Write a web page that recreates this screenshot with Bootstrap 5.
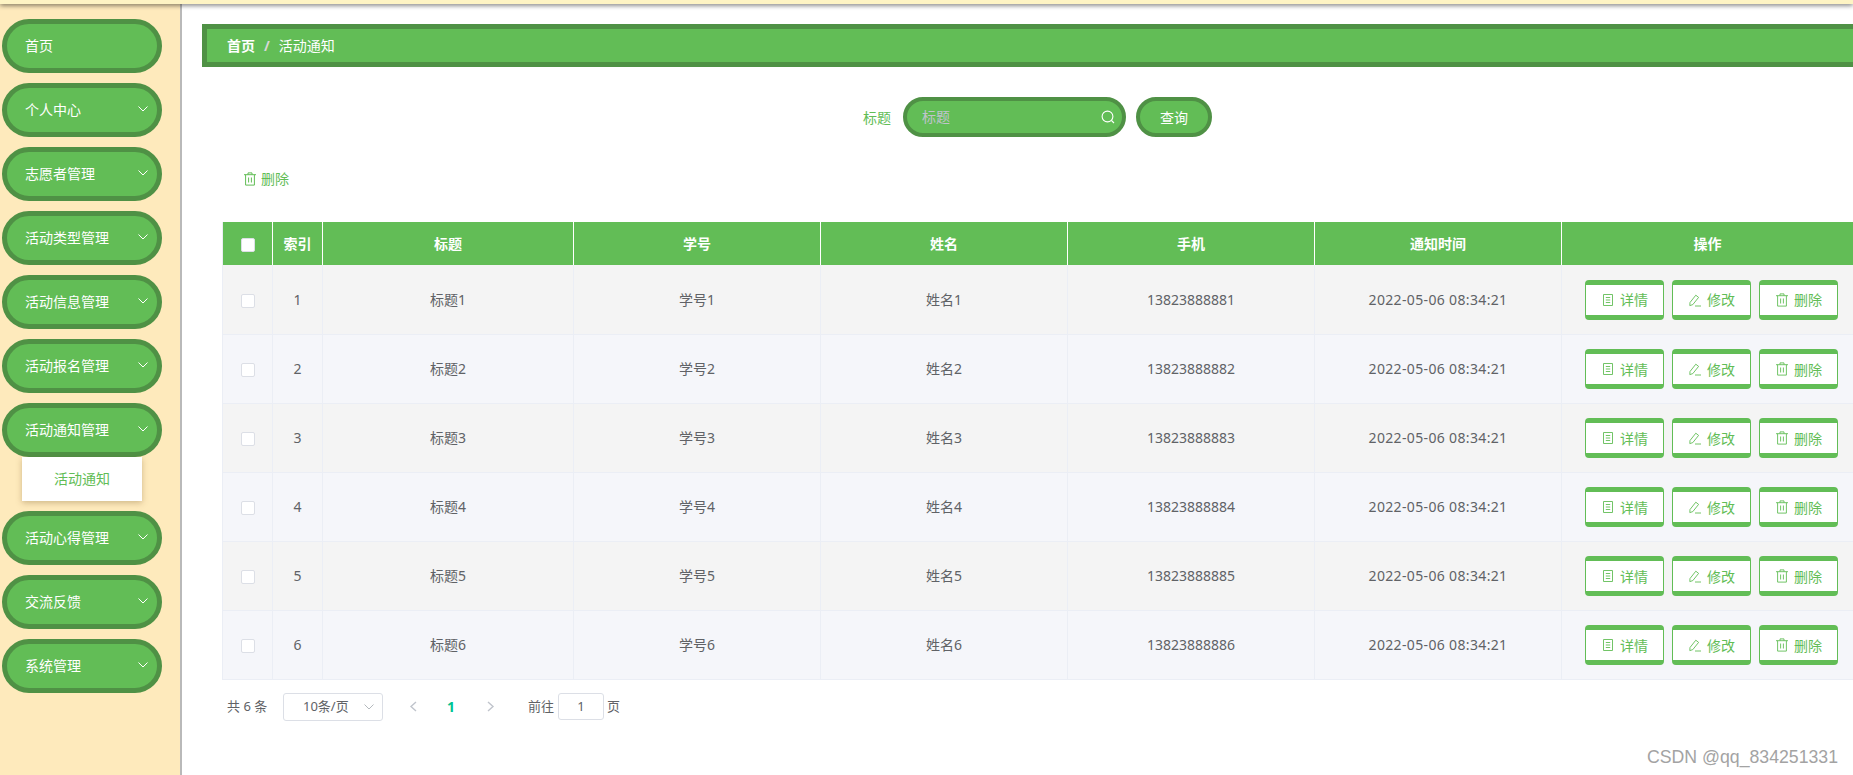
<!DOCTYPE html>
<html lang="zh-CN">
<head>
<meta charset="utf-8">
<title>活动通知</title>
<link href="https://cdn.jsdelivr.net/npm/bootstrap@5.3.0/dist/css/bootstrap.min.css" rel="stylesheet">
<style>
html,body{height:100%;overflow:hidden;}
body{font-family:"Noto Sans","Noto Sans CJK SC",sans-serif;font-size:14px;color:#606266;background:#fff;}
.top-strip{height:4px;background:#fef4c4;box-shadow:0 1px 5px rgba(0,0,0,.65);position:relative;z-index:2;}
.shell{height:771px;}
.side-rail{width:182px;flex:none;background:#feeabc;border-right:2px solid #b9b9b9;padding:15px 0 0 2px;}
.menu-pill{width:160px;height:54px;border:5px solid #4f9145;border-radius:27px;background:#62bd56;color:#fff;padding:0 9px 0 18px;margin-bottom:10px;line-height:1;}
.menu-pill svg{width:10px;height:6px;margin-top:-2px;}
.sub-panel{width:120px;height:44px;margin:-10px 0 10px 20px;background:#fff;box-shadow:0 2px 6px rgba(120,90,40,.35);color:#62bd56;padding:0 0 2px 32px;}
.work-area{width:1691px;flex:none;}
.crumb-bar{margin:20px 0 0 20px;height:43px;border:5px solid #4f9145;border-radius:0 30px 30px 0;background:#62bd56;padding-left:20px;color:#fff;}
.crumb-bar .breadcrumb{--bs-breadcrumb-margin-bottom:0;--bs-breadcrumb-divider-color:#d7d7d7;--bs-breadcrumb-item-padding-x:9px;color:#fff;}
.crumb-bar .breadcrumb-item{color:#fff;}
.crumb-bar .breadcrumb-item.active{color:#fff;}
.crumb-bar .breadcrumb-item+.breadcrumb-item::before{font-weight:700;}
.crumb-first{font-weight:700;}
.search-row{margin:30px 0 0 20px;height:40px;}
.search-label{color:#62bd56;margin-right:12px;}
.search-box{width:223px;height:40px;}
.search-input.form-control{height:40px;border:4px solid #4f9145;border-radius:20px;background:#62bd56;color:#fff;padding:0 30px 2px 15px;font-size:14px;box-shadow:none;}
.search-input.form-control::placeholder{color:#c0c4cc;opacity:1;}
.search-glass{position:absolute;right:11px;top:13px;width:14px;height:14px;}
.search-go.btn{width:76px;height:40px;margin-left:10px;border:4px solid #4f9145;border-radius:20px;background:#62bd56;color:#fff;font-size:14px;padding:0;}
.bulk-row{margin:26px 0 0 61px;height:31px;color:#62bd56;gap:4px;}
.bulk-row svg{width:14px;height:14px;}
.grid-box{margin:0 0 0 40px;width:1631px;padding-top:28px;}
.data-table.table{table-layout:fixed;width:1631px;margin:0;border-collapse:collapse;--bs-table-bg:transparent;--bs-table-color:#606266;font-size:14px;text-align:center;border-left:1px solid #ebeef5;}
.data-table th{height:43px;padding:0;background:#62bd56;color:#fff;font-weight:700;border:0;border-right:1px solid #fff;vertical-align:middle;}
.data-table td{height:69px;padding:0;border:0;border-right:1px solid #ebeef5;border-bottom:1px solid #ebeef5;vertical-align:middle;}
.data-table tbody tr:nth-child(odd) td{background:#f4f4f4;}
.data-table tbody tr:nth-child(even) td{background:#f5f6fa;}
.w-tick{width:50px;}.w-idx{width:50px;}.w-title{width:251px;}.w-mid{width:247px;}.w-ops{width:292px;}
.stamp{letter-spacing:.35px;}
.tick{display:inline-block;width:14px;height:14px;border:1px solid #dcdfe6;border-radius:2px;background:#fff;vertical-align:middle;}
.tick-head{margin-left:0;}
.row-btns{gap:8px;padding:1px 0 0 23px;}
.row-btn{width:79px;height:40px;border:1px solid #62bd56;border-top-width:5px;border-bottom-width:5px;border-radius:4px;background:#fff;color:#62bd56;gap:5px;font-size:14px;padding:0;}
.row-btn svg{width:14px;height:14px;flex:none;stroke-width:.9;}
.pager{margin:13px 0 0 5px;height:28px;color:#606266;font-size:13px;}
.pager-total{width:56px;}
.pager-size{width:100px;height:28px;border:1px solid #dcdfe6;border-radius:3px;padding:0 8px 0 19px;}
.pager-size svg{width:10px;height:6px;}
.pager-arrow{width:9px;height:11px;}
.pager-prev{margin-left:26px;}
.pager-cur{margin:0 31px 0 29px;color:#00c292;font-weight:700;font-size:14px;}
.pager-jump{margin-left:33px;}
.pager-input{width:46px;height:27px;border:1px solid #dcdfe6;border-radius:3px;margin:0 3px 0 4px;}
.mark-water{position:absolute;right:15px;bottom:8px;color:#a3a3a3;font-family:"Liberation Sans",sans-serif;font-size:17.7px;line-height:1;}
</style>
</head>
<body>
<svg width="0" height="0" class="d-block" aria-hidden="true">
<symbol id="i-down" viewBox="0 0 10 6"><path d="M.5.5 5 5 9.500.5" fill="none" stroke="currentColor"/></symbol>
<symbol id="i-trash" viewBox="0 0 14 14"><path d="M1 2.700h12M5 2.700V.9h4v1.800M2.600 2.700v10.400h8.800V2.700M5.600 5.500v5M8.400 5.500v5" fill="none" stroke="currentColor"/></symbol>
<symbol id="i-doc" viewBox="0 0 14 14"><path d="M2.500 1.500h9v11h-9zM4.800 4.500h4.400M4.800 7h4.400M4.800 9.500h4.400" fill="none" stroke="currentColor"/></symbol>
<symbol id="i-edit" viewBox="0 0 14 14"><path d="M2 9.500 7.800 2.200 10.600 4.400 4.800 11.600 1.800 12.600ZM7 13h6" fill="none" stroke="currentColor"/></symbol>
</svg>
<div class="top-strip"></div>
<div class="shell d-flex">
  <aside class="side-rail">
    <div class="menu-pill d-flex align-items-center">首页</div>
    <div class="menu-pill d-flex align-items-center justify-content-between">个人中心<svg><use href="#i-down"/></svg></div>
    <div class="menu-pill d-flex align-items-center justify-content-between">志愿者管理<svg><use href="#i-down"/></svg></div>
    <div class="menu-pill d-flex align-items-center justify-content-between">活动类型管理<svg><use href="#i-down"/></svg></div>
    <div class="menu-pill d-flex align-items-center justify-content-between">活动信息管理<svg><use href="#i-down"/></svg></div>
    <div class="menu-pill d-flex align-items-center justify-content-between">活动报名管理<svg><use href="#i-down"/></svg></div>
    <div class="menu-pill d-flex align-items-center justify-content-between">活动通知管理<svg><use href="#i-down"/></svg></div>
    <div class="sub-panel d-flex align-items-center">活动通知</div>
    <div class="menu-pill d-flex align-items-center justify-content-between">活动心得管理<svg><use href="#i-down"/></svg></div>
    <div class="menu-pill d-flex align-items-center justify-content-between">交流反馈<svg><use href="#i-down"/></svg></div>
    <div class="menu-pill d-flex align-items-center justify-content-between">系统管理<svg><use href="#i-down"/></svg></div>
  </aside>
  <main class="work-area">
    <nav class="crumb-bar d-flex align-items-center" aria-label="breadcrumb">
      <ol class="breadcrumb">
        <li class="breadcrumb-item crumb-first">首页</li>
        <li class="breadcrumb-item active">活动通知</li>
      </ol>
    </nav>
    <div class="search-row d-flex justify-content-center align-items-center">
      <span class="search-label">标题</span>
      <div class="search-box position-relative">
        <input class="form-control search-input" placeholder="标题">
        <svg class="search-glass" viewBox="0 0 14 14"><circle cx="6.500" cy="6.500" r="5.400" fill="none" stroke="#fff" stroke-width="1.100"/><path d="M10.500 10.500 13 13" stroke="#fff" stroke-width="1.100"/></svg>
      </div>
      <button class="btn search-go" type="button">查询</button>
    </div>
    <div class="bulk-row d-flex align-items-center"><svg><use href="#i-trash"/></svg><span>删除</span></div>
    <div class="grid-box">
      <table class="table data-table">
        <thead><tr>
          <th class="w-tick"><span class="tick tick-head"></span></th><th class="w-idx">索引</th><th class="w-title">标题</th><th class="w-mid">学号</th><th class="w-mid">姓名</th><th class="w-mid">手机</th><th class="w-mid">通知时间</th><th class="w-ops">操作</th>
        </tr></thead>
        <tbody>
          <tr><td><span class="tick"></span></td><td>1</td><td>标题1</td><td>学号1</td><td>姓名1</td><td>13823888881</td><td class="stamp">2022-05-06 08:34:21</td><td><div class="row-btns d-flex"><button class="row-btn d-flex align-items-center justify-content-center"><svg><use href="#i-doc"/></svg>详情</button><button class="row-btn d-flex align-items-center justify-content-center"><svg><use href="#i-edit"/></svg>修改</button><button class="row-btn d-flex align-items-center justify-content-center"><svg><use href="#i-trash"/></svg>删除</button></div></td></tr>
          <tr><td><span class="tick"></span></td><td>2</td><td>标题2</td><td>学号2</td><td>姓名2</td><td>13823888882</td><td class="stamp">2022-05-06 08:34:21</td><td><div class="row-btns d-flex"><button class="row-btn d-flex align-items-center justify-content-center"><svg><use href="#i-doc"/></svg>详情</button><button class="row-btn d-flex align-items-center justify-content-center"><svg><use href="#i-edit"/></svg>修改</button><button class="row-btn d-flex align-items-center justify-content-center"><svg><use href="#i-trash"/></svg>删除</button></div></td></tr>
          <tr><td><span class="tick"></span></td><td>3</td><td>标题3</td><td>学号3</td><td>姓名3</td><td>13823888883</td><td class="stamp">2022-05-06 08:34:21</td><td><div class="row-btns d-flex"><button class="row-btn d-flex align-items-center justify-content-center"><svg><use href="#i-doc"/></svg>详情</button><button class="row-btn d-flex align-items-center justify-content-center"><svg><use href="#i-edit"/></svg>修改</button><button class="row-btn d-flex align-items-center justify-content-center"><svg><use href="#i-trash"/></svg>删除</button></div></td></tr>
          <tr><td><span class="tick"></span></td><td>4</td><td>标题4</td><td>学号4</td><td>姓名4</td><td>13823888884</td><td class="stamp">2022-05-06 08:34:21</td><td><div class="row-btns d-flex"><button class="row-btn d-flex align-items-center justify-content-center"><svg><use href="#i-doc"/></svg>详情</button><button class="row-btn d-flex align-items-center justify-content-center"><svg><use href="#i-edit"/></svg>修改</button><button class="row-btn d-flex align-items-center justify-content-center"><svg><use href="#i-trash"/></svg>删除</button></div></td></tr>
          <tr><td><span class="tick"></span></td><td>5</td><td>标题5</td><td>学号5</td><td>姓名5</td><td>13823888885</td><td class="stamp">2022-05-06 08:34:21</td><td><div class="row-btns d-flex"><button class="row-btn d-flex align-items-center justify-content-center"><svg><use href="#i-doc"/></svg>详情</button><button class="row-btn d-flex align-items-center justify-content-center"><svg><use href="#i-edit"/></svg>修改</button><button class="row-btn d-flex align-items-center justify-content-center"><svg><use href="#i-trash"/></svg>删除</button></div></td></tr>
          <tr><td><span class="tick"></span></td><td>6</td><td>标题6</td><td>学号6</td><td>姓名6</td><td>13823888886</td><td class="stamp">2022-05-06 08:34:21</td><td><div class="row-btns d-flex"><button class="row-btn d-flex align-items-center justify-content-center"><svg><use href="#i-doc"/></svg>详情</button><button class="row-btn d-flex align-items-center justify-content-center"><svg><use href="#i-edit"/></svg>修改</button><button class="row-btn d-flex align-items-center justify-content-center"><svg><use href="#i-trash"/></svg>删除</button></div></td></tr>
        </tbody>
      </table>
      <div class="pager d-flex align-items-center">
        <span class="pager-total">共 6 条</span>
        <div class="pager-size d-flex align-items-center justify-content-between"><span>10条/页</span><svg class="text-secondary opacity-50"><use href="#i-down"/></svg></div>
        <svg class="pager-arrow pager-prev" viewBox="0 0 9 11"><path d="M7 1 2 5.500 7 10" fill="none" stroke="#c0c4cc" stroke-width="1.400"/></svg>
        <span class="pager-cur">1</span>
        <svg class="pager-arrow" viewBox="0 0 9 11"><path d="M2 1 7 5.500 2 10" fill="none" stroke="#c0c4cc" stroke-width="1.400"/></svg>
        <span class="pager-jump">前往</span>
        <div class="pager-input d-flex align-items-center justify-content-center">1</div>
        <span>页</span>
      </div>
    </div>
  </main>
</div>
<div class="mark-water">CSDN @qq_834251331</div>
</body>
</html>
